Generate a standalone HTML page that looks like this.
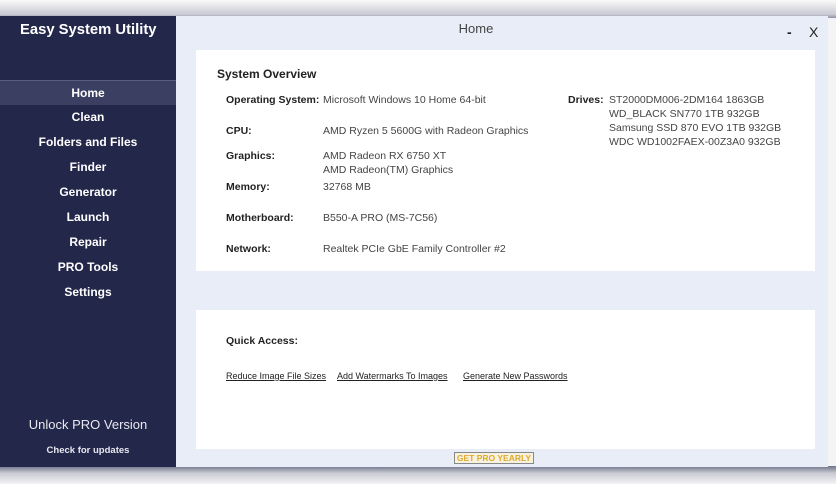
<!DOCTYPE html>
<html><head><style>
*{margin:0;padding:0;box-sizing:border-box}
body{width:836px;height:484px;overflow:hidden;background:#f4f4f6;font-family:"Liberation Sans",sans-serif;position:relative}
.shadowtop{position:absolute;left:0;top:0;width:836px;height:18px;background:linear-gradient(#fafafa,#c9cad3 80%,#8d90a3)}
.shadowbot{position:absolute;left:0;top:466px;width:836px;height:18px;background:linear-gradient(#70738a,#c9cad3 40%,#f4f4f6)}
.win{position:absolute;left:0;top:16px;width:828px;height:451px;background:#e9edf8}
.side{position:absolute;left:0;top:16px;width:176px;height:451px;background:#23274a;color:#fff;text-align:center}
.side .t{position:absolute;left:20px;top:6px;font-size:14.8px;font-weight:bold;text-align:left}
.nav{position:absolute;top:64px;left:0;width:176px}
.nav div{height:25px;line-height:25px;font-size:12px;font-weight:bold}
.nav .a{background:#3b4062;border-top:1px solid #5a5e7c}
.unlock{position:absolute;top:401px;width:176px;font-size:13px;color:#e8e8f0}
.chk{position:absolute;top:429px;width:176px;font-size:9.5px;font-weight:bold;color:#e8e8f0}
.title{position:absolute;left:176px;width:600px;top:21px;text-align:center;font-size:13px;color:#444}
.ctl{position:absolute;top:24px;font-size:14px;color:#222}
.p{position:absolute;background:#fff;left:196px;width:619px}
.p1{top:50px;height:221px}
.p2{top:310px;height:139px}
.lbl{position:absolute;font-size:10.5px;font-weight:bold;color:#222}
.val{position:absolute;font-size:10.5px;color:#444;line-height:14px}
.ql{position:absolute;top:371px;font-size:9px;color:#222;text-decoration:underline}
.pro{position:absolute;left:454px;top:452px;width:80px;height:12px;border:1px solid #888;background:#f7f2df;color:#e0a92c;font-size:8.5px;font-weight:bold;text-align:center;line-height:10px}
</style></head><body>
<div class="shadowtop"></div><div class="shadowbot"></div>
<div class="win"></div>
<div class="side">
<div class="t">Easy System Utility</div>
<div class="nav">
<div class="a">Home</div><div>Clean</div><div>Folders and Files</div><div>Finder</div><div>Generator</div><div>Launch</div><div>Repair</div><div>PRO Tools</div><div>Settings</div>
</div>
<div class="unlock">Unlock PRO Version</div>
<div class="chk">Check for updates</div>
</div>
<div class="title">Home</div>
<div class="ctl" style="left:787px;font-weight:bold">-</div>
<div class="ctl" style="left:809px">X</div>
<div class="p p1"></div><div class="p p2"></div>
<div class="lbl" style="left:217px;top:67px;font-size:12px">System Overview</div>
<div class="lbl" style="left:226px;top:94px">Operating System:</div><div class="val" style="left:323px;top:93px">Microsoft Windows 10 Home 64-bit</div>
<div class="lbl" style="left:226px;top:125px">CPU:</div><div class="val" style="left:323px;top:124px">AMD Ryzen 5 5600G with Radeon Graphics</div>
<div class="lbl" style="left:226px;top:150px">Graphics:</div><div class="val" style="left:323px;top:149px">AMD Radeon RX 6750 XT<br>AMD Radeon(TM) Graphics</div>
<div class="lbl" style="left:226px;top:181px">Memory:</div><div class="val" style="left:323px;top:180px">32768 MB</div>
<div class="lbl" style="left:226px;top:212px">Motherboard:</div><div class="val" style="left:323px;top:211px">B550-A PRO (MS-7C56)</div>
<div class="lbl" style="left:226px;top:243px">Network:</div><div class="val" style="left:323px;top:242px">Realtek PCIe GbE Family Controller #2</div>
<div class="lbl" style="left:568px;top:94px">Drives:</div><div class="val" style="left:609px;top:93px">ST2000DM006-2DM164 1863GB<br>WD_BLACK SN770 1TB 932GB<br>Samsung SSD 870 EVO 1TB 932GB<br>WDC WD1002FAEX-00Z3A0 932GB</div>
<div class="lbl" style="left:226px;top:335px">Quick Access:</div>
<div class="ql" style="left:226px">Reduce Image File Sizes</div>
<div class="ql" style="left:337px">Add Watermarks To Images</div>
<div class="ql" style="left:463px">Generate New Passwords</div>
<div class="pro">GET PRO YEARLY</div>
</body></html>
